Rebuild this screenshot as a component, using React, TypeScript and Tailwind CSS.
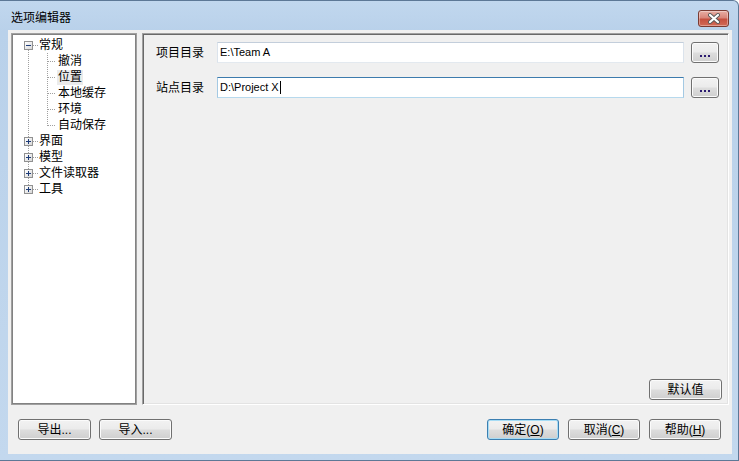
import React from "react";

const font = "font-['Liberation_Sans','Noto_Sans_CJK_SC',sans-serif]";

function Btn({ children, className = "", focused = false }: { children: React.ReactNode; className?: string; focused?: boolean }) {
  return (
    <div
      className={`flex items-center justify-center h-[21px] rounded-[3px] border text-[12px] leading-none text-black bg-[linear-gradient(#f2f2f2_0%,#ebebeb_48%,#dddddd_52%,#cfcfcf_100%)] ${
        focused
          ? "border-[#3c7fb1] shadow-[inset_0_0_0_1px_#a6dcf5]"
          : "border-[#707070] shadow-[inset_0_0_0_1px_#fbfbfb]"
      } ${className}`}
    >
      {children}
    </div>
  );
}

function Box({ plus }: { plus?: boolean }) {
  return (
    <svg width="9" height="9" viewBox="0 0 9 9" className="shrink-0">
      <defs>
        <linearGradient id="bg" x1="0" y1="0" x2="1" y2="1">
          <stop offset="0" stopColor="#ffffff" />
          <stop offset="1" stopColor="#d8d8d8" />
        </linearGradient>
      </defs>
      <rect x="0.5" y="0.5" width="8" height="8" fill="#fff" stroke="#919191" />
      <rect x="1" y="1" width="7" height="7" fill="url(#bg)" />
      <line x1="2" y1="4.5" x2="7" y2="4.5" stroke="#1e3c78" />
      {plus && <line x1="4.5" y1="2" x2="4.5" y2="7" stroke="#1e3c78" />}
    </svg>
  );
}

type Row = { label: string; level: 0 | 1; expander?: "minus" | "plus"; selected?: boolean };

const rows: Row[] = [
  { label: "常规", level: 0, expander: "minus" },
  { label: "撤消", level: 1 },
  { label: "位置", level: 1, selected: true },
  { label: "本地缓存", level: 1 },
  { label: "环境", level: 1 },
  { label: "自动保存", level: 1 },
  { label: "界面", level: 0, expander: "plus" },
  { label: "模型", level: 0, expander: "plus" },
  { label: "文件读取器", level: 0, expander: "plus" },
  { label: "工具", level: 0, expander: "plus" },
];

function TreeLines() {
  const cy = (i: number) => 10 + 16 * i + 0.5;
  const dash = { stroke: "#a0a0a0", strokeDasharray: "1 1", shapeRendering: "crispEdges" as const };
  return (
    <svg className="absolute left-0 top-0 pointer-events-none" width="120" height="170">
      <line x1="15.5" y1={cy(0)} x2="15.5" y2={cy(9)} {...dash} />
      {[0, 6, 7, 8, 9].map((i) => (
        <line key={i} x1="20" y1={cy(i)} x2="25" y2={cy(i)} {...dash} />
      ))}
      <line x1="34.5" y1={18} x2="34.5" y2={cy(5)} {...dash} />
      {[1, 2, 3, 4, 5].map((i) => (
        <line key={i} x1="35" y1={cy(i)} x2="43" y2={cy(i)} {...dash} />
      ))}
    </svg>
  );
}

function Tree() {
  return (
    <div className="w-[126px] shrink-0 bg-white border border-[#a0a0a0] shadow-[inset_0_0_0_1px_#828282] p-[1px]">
      <div className="relative h-full">
        <TreeLines />
        <div className="relative flex flex-col pt-[2px]">
          {rows.map((r) => (
            <div key={r.label} className="h-[16px] flex items-center">
              {r.level === 0 ? (
                <div className="flex items-center pl-[11px]">
                  <div className="mt-[1px] flex">
                    <Box plus={r.expander === "plus"} />
                  </div>
                  <span className="ml-[6px] text-[12px] leading-[16px] text-black">{r.label}</span>
                </div>
              ) : (
                <span
                  className={`ml-[44px] px-[1px] text-[12px] leading-[15px] text-black ${r.selected ? "bg-[#ebebeb]" : ""}`}
                >
                  {r.label}
                </span>
              )}
            </div>
          ))}
        </div>
      </div>
    </div>
  );
}

function Dots() {
  return (
    <svg width="12" height="3" viewBox="0 0 12 3" className="mt-[7px]">
      <rect x="1" y="0" width="2" height="2" fill="#2a1a70" />
      <rect x="5" y="0" width="2" height="2" fill="#2a1a70" />
      <rect x="9" y="0" width="2" height="2" fill="#2a1a70" />
    </svg>
  );
}

function Field({ label, value, focused }: { label: string; value: string; focused?: boolean }) {
  return (
    <div className="flex items-center">
      <div className="w-[61px] shrink-0 text-[12px] text-black">{label}</div>
      <div
        className={`flex-1 h-[21px] flex items-center bg-white border pl-[2px] text-[11px] text-black ${
          focused
            ? "border-[#a4c9e3] border-t-[#3d7bad] border-b-[#b7d9ed]"
            : "border-[#dbe3ec] border-t-[#c3cedb] border-b-[#e3e9ef]"
        }`}
      >
        <span>{value}</span>
        {focused && <span className="ml-[1px] w-[1px] h-[13px] bg-black" />}
      </div>
      <Btn className="ml-[7px] w-[28px]">
        <Dots />
      </Btn>
    </div>
  );
}

function CloseButton() {
  return (
    <div className="w-[31px] h-[17px] rounded-[3px] border border-[#7a3b32] bg-[linear-gradient(#e8aea4_0%,#d9867a_45%,#c5503f_55%,#d26a56_100%)] shadow-[inset_0_0_0_1px_rgba(255,255,255,0.35)] flex items-center justify-center">
      <svg width="14" height="11" viewBox="0 0 14 11">
        <path d="M3 2 L11 9 M11 2 L3 9" stroke="#5a5a5a" strokeWidth="4" strokeLinecap="round" />
        <path d="M3 2 L11 9 M11 2 L3 9" stroke="#ffffff" strokeWidth="2.2" strokeLinecap="round" />
      </svg>
    </div>
  );
}

export default function App() {
  return (
    <div
      className={`${font} w-[739px] h-[461px] flex flex-col border-t border-r border-b border-[#5d7896] rounded-tr-[6px] bg-[linear-gradient(#c1d7ee_0px,#b9d1ea_30px,#c3d8ee_100%)] overflow-hidden`}
    >
      <div className="h-[29px] shrink-0 flex items-start justify-between pl-[11px] pr-[9px] pt-[9px]">
        <span className="text-[12px] leading-[16px] text-black">选项编辑器</span>
        <CloseButton />
      </div>
      <div className="ml-[8px] mr-[6px] h-[424px] bg-[#f0f0f0] flex flex-col">
        <div className="flex h-[375px] pt-[3px] pl-[3px] pr-[3px] gap-[5px]">
          <Tree />
          <div className="flex-1 flex flex-col border border-t-[#a0a0a0] border-l-[#a0a0a0] border-b-white border-r-white shadow-[inset_1px_1px_0_#696969,inset_-1px_-1px_0_#e3e3e3] pt-[8px] pl-[13px] pr-[9px] pb-[4px]">
            <Field label="项目目录" value="E:\Team A" />
            <div className="h-[14px]" />
            <Field label="站点目录" value="D:\Project X" focused />
            <div className="mt-auto self-end mr-[-3px]">
              <Btn className="w-[73px]">默认值</Btn>
            </div>
          </div>
        </div>
        <div className="flex items-center justify-between mt-[14px] pl-[10px] pr-[11px]">
          <div className="flex gap-[8px]">
            <Btn className="w-[73px]">导出...</Btn>
            <Btn className="w-[73px]">导入...</Btn>
          </div>
          <div className="flex gap-[9px]">
            <Btn className="w-[72px]" focused>
              确定(<span className="underline">O</span>)
            </Btn>
            <Btn className="w-[72px]">
              取消(<span className="underline">C</span>)
            </Btn>
            <Btn className="w-[72px]">
              帮助(<span className="underline">H</span>)
            </Btn>
          </div>
        </div>
      </div>
    </div>
  );
}
